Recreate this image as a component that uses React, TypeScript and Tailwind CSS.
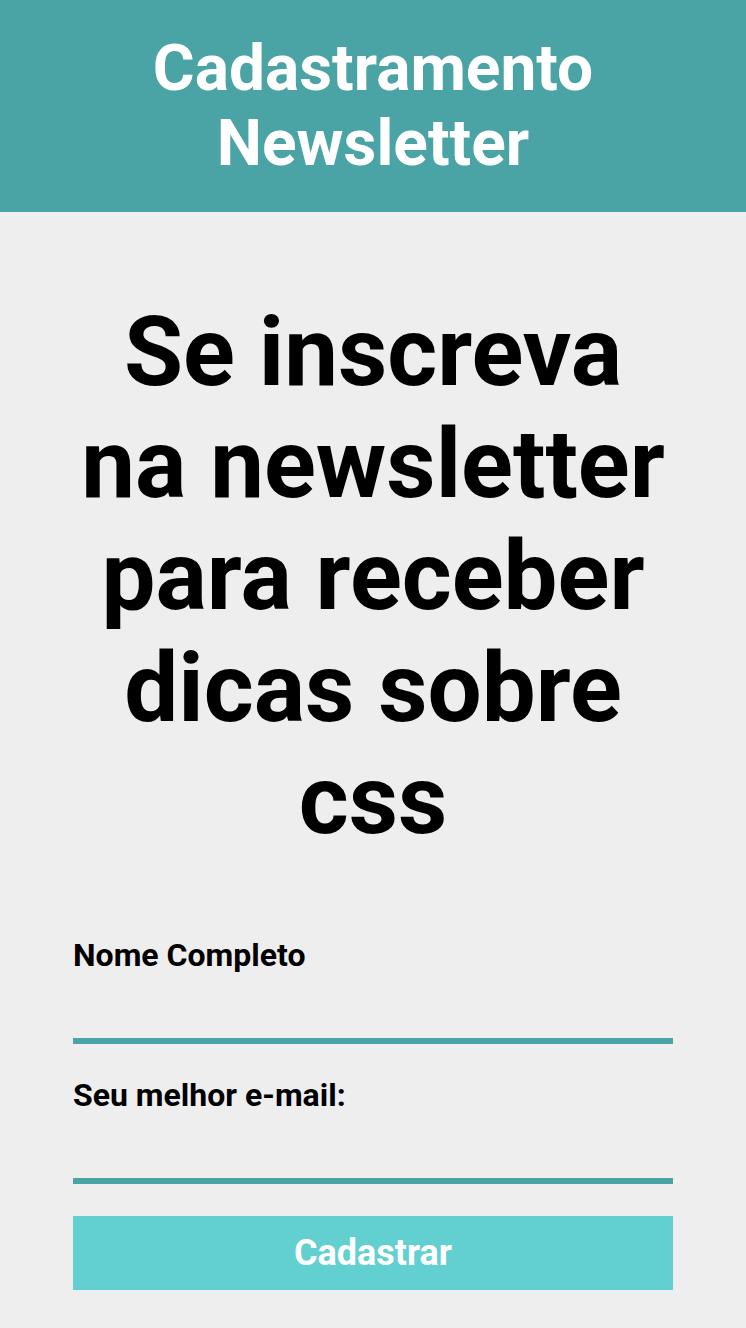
export default function App() {
  return (
    <div className="min-h-[1328px] bg-[#eeeeee] font-['Roboto',sans-serif]">
      <header className="bg-[#4aa3a4] h-[212px] flex items-center justify-center">
        <h1 className="text-white font-bold text-[64px] leading-[75px] text-center">
          Cadastramento
          <br />
          Newsletter
        </h1>
      </header>
      <main className="w-[600px] mx-auto pt-[84px]">
        <h2 className="text-black font-bold text-[96px] leading-[112px] text-center">
          Se inscreva na newsletter para receber dicas sobre css
        </h2>
        <form className="mt-[80px] flex flex-col">
          <label className="text-[32px] font-bold text-black leading-[38px]">Nome Completo</label>
          <input className="mt-[30px] h-[40px] bg-transparent border-b-[6px] border-[#4aa3a4] outline-none" />
          <label className="mt-[32px] text-[32px] font-bold text-black leading-[38px]">Seu melhor e-mail:</label>
          <input className="mt-[30px] h-[40px] bg-transparent border-b-[6px] border-[#4aa3a4] outline-none" />
          <button type="button" className="mt-[32px] h-[74px] bg-[#62cfd1] text-white font-bold text-[36px] leading-[42px]">
            Cadastrar
          </button>
        </form>
      </main>
    </div>
  );
}
